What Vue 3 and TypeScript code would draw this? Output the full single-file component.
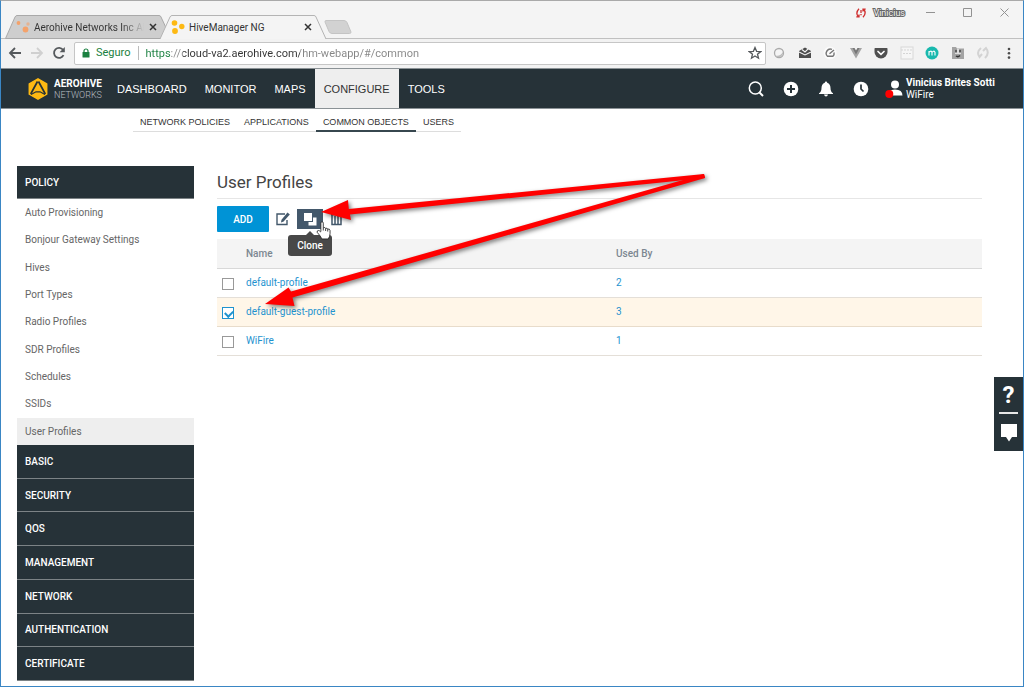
<script setup lang="ts">
import { ref } from 'vue'

interface Profile {
  name: string
  usedBy: number
  checked: boolean
}

const address = ref('https://cloud-va2.aerohive.com/hm-webapp/#/common')
const mainNav = ['DASHBOARD', 'MONITOR', 'MAPS', 'CONFIGURE', 'TOOLS']
const subNav = ['NETWORK POLICIES', 'APPLICATIONS', 'COMMON OBJECTS', 'USERS']
const policyItems = [
  'Auto Provisioning',
  'Bonjour Gateway Settings',
  'Hives',
  'Port Types',
  'Radio Profiles',
  'SDR Profiles',
  'Schedules',
  'SSIDs',
  'User Profiles',
]
const sections = ['BASIC', 'SECURITY', 'QOS', 'MANAGEMENT', 'NETWORK', 'AUTHENTICATION', 'CERTIFICATE']
const profiles = ref<Profile[]>([
  { name: 'default-profile', usedBy: 2, checked: false },
  { name: 'default-guest-profile', usedBy: 3, checked: true },
  { name: 'WiFire', usedBy: 1, checked: false },
])
</script>

<template>
  <div class="window">
    <div class="titlebar">
      <div class="tabs" role="tablist">
        <div class="tab" role="tab" aria-selected="false">
          <svg class="tab-shape" viewBox="0 0 167 24"><path d="M.5 23.5 L10 2 Q10.800 .5 12 .5 H154 Q155.500 .5 156 2 L166 23.500 Z" fill="#cecece" stroke="#a9a9a9" /></svg>
          <svg class="favicon" viewBox="0 0 14 14"><g fill="#f4a26b"><circle cx="2.500" cy="3" r="1.900" /><circle cx="12" cy="4" r="1.700" opacity=".6" /><circle cx="9.500" cy="9.500" r="2.900" /></g></svg>
          <button class="tab-title faded">Aerohive Networks Inc AE</button>
          <button class="tab-close" aria-label="Close tab"><svg viewBox="0 0 8 8"><path d="M1 1 L7 7 M7 1 L1 7" /></svg></button>
        </div>
        <div class="tab active" role="tab" aria-selected="true">
          <svg class="tab-shape" viewBox="0 0 167 24"><path d="M0 24 L10 2 Q10.800 .5 12 .5 H154 Q155.500 .5 156 2 L166 24" fill="#f4f4f4" stroke="#b4b4b4" /></svg>
          <svg class="favicon" viewBox="0 0 14 14"><g fill="#fdb913"><circle cx="3.500" cy="3" r="2.800" /><circle cx="10.800" cy="6.500" r="2.700" /><circle cx="4" cy="11" r="2.900" /></g></svg>
          <button class="tab-title">HiveManager NG</button>
          <button class="tab-close" aria-label="Close tab"><svg viewBox="0 0 8 8"><path d="M1 1 L7 7 M7 1 L1 7" /></svg></button>
        </div>
        <button class="new-tab" aria-label="New tab"><svg viewBox="0 0 28 14"><path d="M2 .5 H20 Q22 .5 23 2.500 L27 12 Q27 13.500 25.500 13.500 H8 Q6 13.500 5 11.500 L1 2 Q.8 .5 2 .5 Z" fill="#d2d2d2" stroke="#c4c4c4" /></svg></button>
      </div>
      <div class="window-controls">
        <svg class="sync" viewBox="0 0 10 10" fill="none" stroke="#cf2e2e" stroke-width="1.300"><path d="M3 .8 Q-1 5 2.500 9 M.3 8.800 H3 V6.500 M7 9.200 Q11 5 7.500 1 M9.700 1.200 H7 V3.500 M5 2 V5 M5 6 V7.200" /></svg>
        <span class="person">Vinicius</span>
        <button aria-label="Minimize"><svg viewBox="0 0 9 9"><path d="M0 4.500 H9" /></svg></button>
        <button aria-label="Maximize"><svg viewBox="0 0 9 9"><path d="M.5 .5 H8.500 V8.500 H.5 Z" /></svg></button>
        <button aria-label="Close"><svg viewBox="0 0 9 9"><path d="M.5 .5 L8.500 8.500 M8.500 .5 L.5 8.500" /></svg></button>
      </div>
    </div>

    <div class="toolbar">
      <button class="tool" aria-label="Back"><svg viewBox="0 0 14 14"><path d="M13 7 H2 M7 2 L2 7 L7 12" fill="none" stroke="#55595c" stroke-width="1.800" /></svg></button>
      <button class="tool" aria-label="Forward"><svg viewBox="0 0 14 14"><path d="M1 7 H12 M7 2 L12 7 L7 12" fill="none" stroke="#d0d0d0" stroke-width="1.800" /></svg></button>
      <button class="tool" aria-label="Reload"><svg viewBox="0 0 14 14"><path d="M11.500 9.200 A5 5 0 1 1 11 3.800" fill="none" stroke="#55595c" stroke-width="1.800" /><path d="M12.800 1 V6.200 H7.600 Z" fill="#55595c" /></svg></button>
      <div class="omnibox">
        <svg class="lock" viewBox="0 0 8 10"><rect x=".5" y="4" width="7" height="5.500" rx=".5" fill="#1a8040" /><path d="M2 4.500 V3 A2 2 0 0 1 6 3 V4.500" fill="none" stroke="#1a8040" stroke-width="1.200" /></svg>
        <span class="secure">Seguro</span>
        <input v-model="address" class="address" type="text" aria-label="Address" />
        <button class="star" aria-label="Bookmark"><svg viewBox="0 0 14 14"><path d="M7 1.500 L8.600 5.300 L12.700 5.600 L9.500 8.200 L10.500 12.200 L7 10 L3.500 12.200 L4.500 8.200 L1.300 5.600 L5.400 5.300 Z" fill="none" stroke="#55595c" stroke-width="1.300" /></svg></button>
      </div>
      <div class="extensions">
        <svg viewBox="0 0 16 16"><circle cx="8" cy="8" r="4.500" fill="#f4f4f4" stroke="#aaa" stroke-width="1.300" /><path d="M12 7 Q12.500 10.500 8.500 12 Q5 12.500 4.500 10.500 Q9.500 11.500 12 7" fill="#bbb" /></svg>
        <svg viewBox="0 0 16 16"><path d="M2 6 L8 2.500 L14 6 V13 H2 Z" fill="#4d4d4d" /><path d="M5 4.500 L8 7 L12.500 2.500 M2 7 L8 10 L14 7" fill="none" stroke="#f4f4f4" stroke-width="1.100" /></svg>
        <svg viewBox="0 0 16 16"><circle cx="8" cy="8" r="6.500" fill="#fff" opacity=".7" /><path d="M11 11.300 H5.500 A4.200 4.200 0 0 1 10 4.400 M12 7.500 A4.200 4.200 0 0 1 11 11.300 M7.500 8.800 L12 5" fill="none" stroke="#777" stroke-width="1.400" /></svg>
        <svg viewBox="0 0 16 16"><path d="M2 3 H6 L8 6.500 L10 3 H14 L8 13.500 Z" fill="#a5a5a5" /><path d="M4.500 3 H6.500 L8 5.500 L9.500 3 H11.500 L8 9.500 Z" fill="#777" /></svg>
        <svg viewBox="0 0 16 16"><path d="M2 3 H14 Q14.500 3 14.500 4 V7 A6.500 6.500 0 0 1 1.500 7 V4 Q1.500 3 2 3 Z" fill="#505050" /><path d="M5 6.500 L8 9.300 L11 6.500" fill="none" stroke="#fff" stroke-width="1.700" stroke-linecap="round" /></svg>
        <svg viewBox="0 0 16 16"><rect x="2" y="2" width="12" height="12" fill="#f6f6f6" stroke="#d8d8d8" /><path d="M2 5 H14 M4 8.500 H12" stroke="#d5d5d5" stroke-dasharray="2 1" /></svg>
        <svg viewBox="0 0 16 16"><circle cx="8" cy="8" r="6.500" fill="#19b9ae" /><path d="M5 10.500 V6 M5 7.500 Q6.500 5 8 7.200 V10.500 M8 7.500 Q9.500 5 11 7.200 V10.500" fill="none" stroke="#fff" stroke-width="1.100" /></svg>
        <svg viewBox="0 0 16 16"><path d="M2 2 H6 L7 3.500 H14 V14 H2 Z" fill="#a3a3a3" /><rect x="5" y="4" width="6" height="5" fill="#ddd" /><path d="M6 4.500 V7.500 M10 4.500 V7.500 M6 11 Q8 12.500 10 10.500" fill="none" stroke="#333" stroke-width="1.500" /></svg>
        <svg viewBox="0 0 16 16"><path d="M6 3 Q1 7 4.500 12 L7 9 M10 13 Q15 8 11 3 L8 6" fill="none" stroke="#d3d3d3" stroke-width="2" /></svg>
        <svg viewBox="0 0 16 16"><g fill="#4b4b4b"><circle cx="8" cy="4" r="1.300" /><circle cx="8" cy="8.300" r="1.300" /><circle cx="8" cy="12.600" r="1.300" /></g></svg>
      </div>
    </div>

    <header class="header">
      <a class="logo" href="#">
        <svg viewBox="0 0 20 22"><path d="M10 .8 L18.700 5.800 V16.200 L10 21.200 L1.300 16.200 V5.800 Z" fill="#fdb913" stroke="#fdb913" stroke-width="1.500" stroke-linejoin="round" /><path d="M9.500 3.500 L2.700 16 M10.500 3.500 L17.300 16" stroke="#263238" stroke-width="1.700" /><path d="M3 16.500 L8 13.800 H12 L17 16.500" fill="none" stroke="#263238" stroke-width="1.300" /></svg>
        <span class="logo-text"><strong>AEROHIVE</strong><span>NETWORKS</span></span>
      </a>
      <nav class="main-nav">
        <a v-for="item in mainNav" :key="item" href="#" :class="{ active: item === 'CONFIGURE' }">{{ item }}</a>
      </nav>
      <div class="header-actions">
        <button aria-label="Search"><svg viewBox="0 0 16 16" fill="none" stroke="#fff"><circle cx="7.300" cy="7" r="6" stroke-width="1.500" /><path d="M11.500 11.500 L15 15" stroke-width="2" /></svg></button>
        <button aria-label="Add"><svg viewBox="0 0 16 16"><circle cx="8" cy="8" r="7.300" fill="#fff" /><path d="M8 4 V12 M4 8 H12" stroke="#263238" stroke-width="2" /></svg></button>
        <button aria-label="Notifications"><svg viewBox="0 0 16 16"><path d="M8 .5 Q9.200 .5 9.200 1.800 Q12.500 3 12.500 7 Q12.500 11 15 12.300 V13 H1 V12.300 Q3.500 11 3.500 7 Q3.500 3 6.800 1.800 Q6.800 .5 8 .5 Z M6 13.500 H10 Q9.500 15.500 8 15.500 Q6.500 15.500 6 13.500" fill="#fff" /></svg></button>
        <button aria-label="History"><svg viewBox="0 0 16 16"><circle cx="8" cy="8" r="7.300" fill="#fff" /><path d="M8 3.500 V8 L10.500 10.500" fill="none" stroke="#263238" stroke-width="1.700" /></svg></button>
        <button class="account">
          <svg viewBox="0 0 18 18"><circle cx="10" cy="4.500" r="4" fill="#fff" /><path d="M2 15.500 Q2.500 9.500 10 9.500 Q17.500 9.500 17.500 15.500 Z" fill="#fff" /><circle cx="4.300" cy="14" r="4" fill="#f00" /></svg>
          <span class="account-text"><strong>Vinicius Brites Sotti</strong><span>WiFire</span></span>
        </button>
      </div>
    </header>

    <nav class="sub-nav">
      <a v-for="item in subNav" :key="item" href="#" :class="{ active: item === 'COMMON OBJECTS' }">{{ item }}</a>
    </nav>

    <div class="body">
      <aside class="sidebar">
        <button class="section">POLICY</button>
        <div class="policy-list">
          <a v-for="item in policyItems" :key="item" href="#" :class="{ active: item === 'User Profiles' }">{{ item }}</a>
        </div>
        <div class="section-list">
          <button v-for="item in sections" :key="item" class="section">{{ item }}</button>
        </div>
      </aside>

      <main class="content">
        <h1>User Profiles</h1>
        <div class="actions">
          <button class="add">ADD</button>
          <button class="icon-button" aria-label="Edit"><svg viewBox="0 0 14 14"><path d="M9 2 H1 V12.500 H11 V8" fill="none" stroke="#43586b" stroke-width="1.400" /><path d="M5 10.500 L5.500 7.800 L11.500 .5 L13.800 2.500 L7.600 9.500 Z" fill="#43586b" /></svg></button>
          <div class="clone-wrap">
            <button class="clone" aria-label="Clone" aria-describedby="clone-tip"><svg viewBox="0 0 14 14" fill="#fff"><path d="M1 1 H9 V9 H1 Z" /><path d="M10 5.500 H13.500 V13.500 H5.500 V10 H10 Z" /></svg></button>
            <span id="clone-tip" class="tooltip" role="tooltip">Clone</span>
            <svg class="pointer" viewBox="0 0 14 18"><path d="M4.500 10 V2 Q4.500 .7 5.600 .7 Q6.800 .7 6.800 2 V6.500 Q8.500 5.500 9 7 Q10.500 6.300 11 7.600 Q13 7.200 13.200 9 V12 Q13.200 14.500 11.500 17 H5.500 Q4 14 1 10.700 Q.7 9 2.300 9 Q3.500 9.200 4.500 10.500 M6.800 6.500 V9 M9 7 V9.500 M11 7.600 V10" fill="#fff" stroke="#222" stroke-width=".8" /></svg>
          </div>
          <button class="icon-button" aria-label="Delete"><svg viewBox="0 0 14 14" fill="none" stroke="#43586b"><path d="M4 1 H9 M1 2.500 H12" stroke-width="1.500" /><path d="M2 3 V12.500 H11 V3 M5 4 V12 M8 4 V12" stroke-width="1.500" /></svg></button>
        </div>
        <table>
          <colgroup><col class="col-check" /><col class="col-name" /><col /></colgroup>
          <thead>
            <tr><th></th><th>Name</th><th>Used By</th></tr>
          </thead>
          <tbody>
            <tr v-for="profile in profiles" :key="profile.name" :class="{ selected: profile.checked }">
              <td><input v-model="profile.checked" type="checkbox" :aria-label="profile.name" /></td>
              <td><a href="#">{{ profile.name }}</a></td>
              <td><a href="#">{{ profile.usedBy }}</a></td>
            </tr>
          </tbody>
        </table>
      </main>
    </div>

    <div class="help">
      <button aria-label="Help"><span class="question">?</span></button>
      <button aria-label="Feedback"><svg viewBox="0 0 18 20"><path d="M1 1 H17 V14 H12 L9 18.500 L6 14 H1 Z" fill="#fff" /></svg></button>
    </div>

    <svg class="arrows" viewBox="0 0 450 144" fill="#f00" aria-hidden="true">
      <polygon points="444,14 445,18 90,54.500 91,60 61,52 88,40 88.800,49" />
      <polygon points="444,14 445,18 32.500,137.500 34.500,146 5,144 28.500,127.500 31,131.500" />
    </svg>
  </div>
</template>

<style>
body { margin: 0; background: #fff; }
</style>

<style scoped>
* { box-sizing: border-box; }
button { margin: 0; padding: 0; border: 0; background: none; color: inherit; font: inherit; display: flex; align-items: center; justify-content: center; }
a { color: inherit; text-decoration: none; }
svg { display: block; flex: none; }

.window { position: relative; min-height: 100vh; border: 1px solid #3a86c4; border-top-color: #a9a9a9; background: #fff; font-family: Roboto, "Liberation Sans", sans-serif; font-size: 10px; color: #333; }

.titlebar { display: flex; justify-content: space-between; height: 38px; background: #f4f4f4; border-bottom: 1px solid #c0c0c0; }
.tabs { display: flex; align-self: flex-end; padding-left: 4px; margin-bottom: -1px; color: #333; }
.tab { position: relative; display: flex; align-items: center; width: 167px; height: 24px; padding: 0 14px 0 11px; gap: 4px; }
.tab.active { margin-left: -12px; }
.tab-shape { position: absolute; inset: 0; width: 100%; height: 100%; }
.favicon { position: relative; width: 14px; height: 14px; }
.tab-title { position: relative; flex: 1; min-width: 0; justify-content: flex-start; white-space: nowrap; }
.faded { color: transparent; background: linear-gradient(90deg, #333 80%, #ccc 100%); background-clip: text; }
.tab-close { position: relative; flex: none; width: 10px; height: 14px; }
.tab-close svg { width: 8px; height: 8px; stroke: #333; stroke-width: 1.5; }
.new-tab { align-self: center; margin-left: -3px; }
.new-tab svg { width: 28px; height: 14px; }
.window-controls { display: flex; align-items: center; height: 23px; padding-right: 14px; }
.window-controls button { width: 9px; height: 9px; margin-left: 28px; }
.window-controls button svg { width: 9px; height: 9px; fill: none; stroke: #929292; }
.sync { width: 10px; height: 10px; margin-right: 7px; }
.window-controls .person { margin-right: -7px; color: #f4f4f4; font-size: 9px; -webkit-text-stroke: 2px #666; paint-order: stroke; }

.toolbar { display: flex; align-items: center; height: 29px; padding: 0 6px 1px 7px; background: #f2f2f2; }
.tool { width: 14px; margin-right: 8px; }
.tool svg { width: 14px; height: 14px; }
.omnibox { display: flex; align-items: center; flex: 1; height: 23px; padding: 0 3px 0 7px; background: #fff; border: 1px solid #c6c6c6; border-radius: 2px; font-size: 11px; }
.lock { width: 8px; height: 10px; margin-right: 6px; }
.secure { color: #1a8040; padding-right: 7px; border-right: 1px solid #bbb; line-height: 14px; }
.address { flex: 1; min-width: 0; padding: 0; margin-left: 7px; border: 0; outline: 0; font: inherit; color: transparent; background: linear-gradient(90deg, #1a8040 25px, #888 25px, #888 37px, #333 37px, #333 154px, #858585 154px); background-clip: text; }
.star svg { width: 14px; height: 14px; }
.extensions { display: flex; justify-content: space-between; width: 246px; margin-left: 5px; }
.extensions svg { width: 16px; height: 16px; }

.header { display: flex; height: 41px; background: #263238; border-top: 1px solid #8b9296; border-bottom: 1px solid #8b9296; color: #fff; }
.logo { display: flex; align-items: center; gap: 6px; width: 107px; padding-left: 27px; }
.logo svg { width: 20px; height: 22px; }
.logo-text { display: flex; flex-direction: column; }
.logo-text strong { font-size: 10px; line-height: 12px; font-weight: 700; }
.logo-text span { font-size: 9px; line-height: 10px; font-weight: 300; color: #b8bec1; }
.main-nav { display: flex; font-family: "Liberation Sans", sans-serif; font-size: 11px; }
.main-nav a { display: flex; align-items: center; padding: 1px 9px 0; }
.main-nav a.active { background: #eee; color: #333; }
.header-actions { display: flex; align-items: center; gap: 19px; margin-left: auto; padding-right: 26px; }
.header-actions svg { width: 16px; height: 16px; }
.header-actions .account { gap: 3px; margin-left: -3px; }
.header-actions .account svg { width: 18px; height: 18px; }
.account-text { display: flex; flex-direction: column; align-items: flex-start; min-width: 91px; font-size: 10px; line-height: 12px; }

.sub-nav { display: flex; width: fit-content; height: 23px; margin-left: 132px; border-bottom: 1px solid #ddd; font-family: "Liberation Sans", sans-serif; font-size: 9px; }
.sub-nav a { display: flex; align-items: center; height: 23px; padding: 3px 7px 0; }
.sub-nav a.active { box-shadow: inset 0 -2px #37474f; }

.body { display: flex; gap: 23px; padding: 34px 41px 5px 16px; }
.sidebar { width: 177px; flex: none; }
.section { width: 100%; height: 33px; padding-left: 8px; justify-content: flex-start; background: #263238; border-bottom: 1px solid #7c8386; color: #fff; font-weight: 500; }
.policy-list { display: grid; grid-auto-rows: 1fr; min-height: 246px; color: #666; }
.policy-list a { display: flex; align-items: center; padding-left: 8px; }
.policy-list a.active { background: #eee; }
.section-list { display: grid; grid-auto-rows: 1fr; min-height: 236px; }
.section-list .section { height: auto; }

.content { flex: 1; min-width: 0; }
h1 { margin: 0; height: 33px; line-height: 32px; font-size: 17px; font-weight: 400; color: #444; border-bottom: 1px solid #e6e6e6; }
.actions { display: flex; align-items: center; height: 40px; gap: 7px; }
.add { width: 52px; height: 26px; background: #0093d6; color: #fff; font-weight: 500; border-radius: 1px; }
.icon-button svg { width: 14px; height: 14px; }
.clone-wrap { position: relative; }
.clone { width: 26px; height: 20px; background: #43586b; }
.clone svg { width: 14px; height: 14px; }
.tooltip { position: absolute; top: 26px; left: -9px; width: 44px; line-height: 21px; text-align: center; border-radius: 3px; background: #484848; color: #fff; font-weight: 500; }
.tooltip::before { content: ""; position: absolute; top: -4px; left: 17px; border: 5px solid transparent; border-top: 0; border-bottom-color: #484848; }
.pointer { position: absolute; top: 12px; left: 19px; width: 15px; height: 19px; }

table { width: 100%; border-collapse: collapse; table-layout: fixed; }
.col-check { width: 29px; }
.col-name { width: 370px; }
th, td { height: 29px; padding: 0; text-align: left; border-bottom: 1px solid #e4dfd8; }
th { background: #f4f4f4; border-color: #d8d8d8; color: #7c8791; font-weight: 500; }
td a { color: #1f93cf; }
.selected td { background: #fff6e8; border-color: #e8dccb; }
td input { appearance: none; display: block; position: relative; width: 12px; height: 12px; margin: 2px 0 0 5px; border: 1px solid #999; background: #fff; }
td input:checked { border-color: #1f93cf; }
td input:checked::after { content: ""; position: absolute; left: 3px; top: 1px; width: 4px; height: 6px; border: solid #1f93cf; border-width: 0 2px 2px 0; transform: rotate(45deg); }

.help { position: absolute; right: 0; top: 376px; width: 29px; padding: 0 5px; background: #263238; color: #fff; }
.help button { width: 100%; height: 37px; }
.help button:first-child { border-bottom: 2px solid #e8e8e8; }
.help svg { width: 18px; height: 20px; }
.question { font-size: 24px; line-height: 30px; font-weight: 700; }
.arrows { position: absolute; left: 259px; top: 159px; width: 450px; height: 144px; overflow: visible; filter: drop-shadow(2px 2px 2px rgba(0, 0, 0, 0.5)); pointer-events: none; }
</style>
